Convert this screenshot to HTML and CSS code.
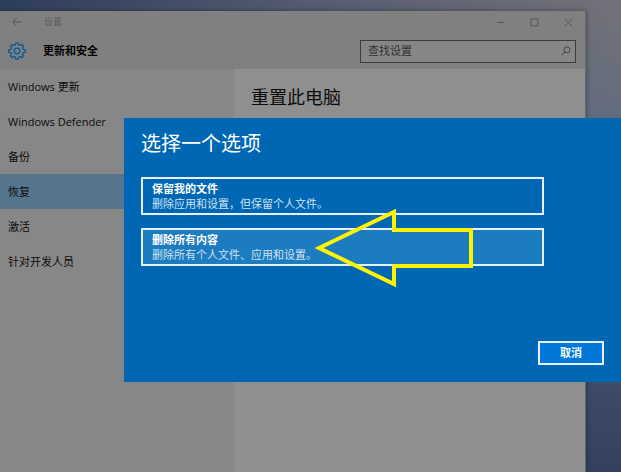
FILE: index.html
```html
<!DOCTYPE html>
<html lang="zh-CN">
<head>
  <meta charset="UTF-8">
  <meta name="viewport" content="width=device-width, initial-scale=1.0">
  <title>设置</title>
  <link rel="stylesheet" href="styles.css">
</head>
<body>
  <div class="window">
    <div class="titlebar">
      <button class="caption-button back-button" aria-label="后退">
        <svg width="10" height="10" viewBox="0 0 10 10"><path d="M9.5 5H1M4.5 1L.8 5l3.7 4"/></svg>
      </button>
      <span class="window-title">设置</span>
      <button class="caption-button" aria-label="最小化">
        <svg width="9" height="9" viewBox="0 0 9 9"><path d="M1 4.5h7"/></svg>
      </button>
      <button class="caption-button" aria-label="最大化">
        <svg width="9" height="9" viewBox="0 0 9 9"><path d="M1 1h7v7H1z"/></svg>
      </button>
      <button class="caption-button" aria-label="关闭">
        <svg width="9" height="9" viewBox="0 0 9 9"><path d="M.7 .7l7.6 7.6M8.3 .7L.7 8.3"/></svg>
      </button>
    </div>

    <header class="header">
      <svg class="gear" width="18" height="18" viewBox="0 0 18 18">
        <path d="M7.4 2.8L7.8 .8h2.4l.4 2 1.5.6 1.7-1.1 1.8 1.8-1.1 1.7.6 1.5 2.1.5v2.4l-2.1.5-.6 1.5 1.1 1.7-1.8 1.8-1.7-1.1-1.5.6-.4 2H7.8l-.4-2-1.5-.6-1.7 1.1-1.8-1.8 1.1-1.7-.6-1.5-2.1-.5V7.8l2.1-.5.6-1.5-1.1-1.7 1.8-1.8 1.7 1.1z"/>
        <circle cx="9" cy="9" r="2.8"/>
      </svg>
      <h1 class="header-title">更新和安全</h1>
      <div class="search">
        <input class="search-input" type="text" placeholder="查找设置" aria-label="查找设置">
        <svg class="search-icon" width="10" height="10" viewBox="0 0 10 10"><circle cx="6" cy="3.8" r="3"/><path d="M3.9 5.9L.6 9.4"/></svg>
      </div>
    </header>

    <div class="main">
      <nav class="sidebar">
        <a class="nav-item" href="#">Windows 更新</a>
        <a class="nav-item" href="#">Windows Defender</a>
        <a class="nav-item" href="#">备份</a>
        <a class="nav-item selected" href="#">恢复</a>
        <a class="nav-item" href="#">激活</a>
        <a class="nav-item" href="#">针对开发人员</a>
      </nav>
      <main class="content">
        <h2 class="content-title">重置此电脑</h2>
      </main>
    </div>
  </div>

  <div class="dialog" role="dialog" aria-labelledby="dialog-title">
    <h2 class="dialog-title" id="dialog-title">选择一个选项</h2>
    <div class="options">
      <button class="option">
        <strong>保留我的文件</strong>
        <span class="option-text">删除应用和设置，但保留个人文件。</span>
      </button>
      <button class="option active">
        <strong>删除所有内容</strong>
        <span class="option-text">删除所有个人文件、应用和设置。</span>
      </button>
    </div>
    <button class="cancel-button">取消</button>
    <svg class="arrow" width="162" height="80" viewBox="0 0 162 80">
      <path d="M6 40L81 4v18h77v36H81v18z"/>
    </svg>
  </div>
</body>
</html>
```

FILE: styles.css
```css
* {
  box-sizing: border-box;
}

body {
  margin: 0;
  min-height: 100vh;
  padding: 11px 35px 0 0;
  display: flex;
  overflow: hidden;
  font-family: "Open Sans", "Noto Sans CJK SC", sans-serif;
  font-size: 11px;
  line-height: 16px;
  color: #0c0c0c;
  background: linear-gradient(to bottom, transparent, #5f6b80 30%, #3e4c69 80%, #33415d),
    linear-gradient(to right, #2c3c5a, #555b70 50%, #747279);
}

button,
input {
  font: inherit;
  color: inherit;
}

h1,
h2 {
  margin: 0;
}

svg {
  fill: none;
  stroke: currentColor;
}

.window {
  flex: 1;
  display: flex;
  flex-direction: column;
  background-color: #808080;
  border-right: 1px solid #66686c;
  box-shadow: 0 0 5px rgba(0, 0, 0, 0.4);
}

.titlebar {
  display: flex;
  align-items: center;
  height: 22px;
  color: #555;
}

.caption-button {
  display: flex;
  justify-content: center;
  align-items: center;
  width: 34px;
  height: 22px;
  padding: 0;
  border: none;
  background: none;
}

.window-title {
  flex: 1;
  padding-left: 10px;
  font-size: 9px;
  color: #5e5e5e;
}

.header {
  display: flex;
  align-items: center;
  height: 36px;
  padding: 0 9px 0 8px;
}

.gear {
  color: #0c5a94;
  stroke-width: 1.3;
}

.header-title {
  flex: 1;
  padding-left: 17px;
  font-size: 11px;
  font-weight: bold;
  color: #000;
}

.search {
  display: flex;
  align-items: center;
  width: 216px;
  height: 23px;
  padding: 0 4px 0 7px;
  border: 1px solid #3c3c3c;
  background-color: #868686;
  color: #454545;
}

.search-input {
  flex: 1;
  min-width: 0;
  padding: 0;
  border: none;
  outline: none;
  background: none;
}

.search-input::placeholder {
  color: #303030;
}

.main {
  flex: 1;
  display: flex;
}

.sidebar {
  width: 40%;
  background-color: #878787;
}

.nav-item {
  display: block;
  height: 35px;
  padding-left: 8px;
  line-height: 35px;
  color: inherit;
  text-decoration: none;
}

.nav-item.selected {
  background-color: #55758c;
}

.content {
  flex: 1;
  padding: 16px 17px;
  background-color: #8f8f8f;
}

.content-title {
  font-size: 18px;
  line-height: 24px;
  font-weight: normal;
}

/* dialog over the settings window */
.dialog {
  position: absolute;
  top: 118px;
  left: 124px;
  right: 0;
  display: flex;
  flex-direction: column;
  padding: 12px 17px 17px;
  background-color: #0067b5;
  color: #fff;
}

.dialog-title {
  font-size: 20px;
  line-height: 28px;
  font-weight: normal;
}

.options {
  display: flex;
  flex-direction: column;
  gap: 13px;
  margin: 19px 60px 0 0;
}

.option {
  display: flex;
  flex-direction: column;
  justify-content: center;
  height: 38px;
  padding: 0 9px;
  border: 2px solid #e6f0f8;
  background-color: #0067b5;
  line-height: 15px;
  text-align: left;
}

.option.active {
  background-color: #1c7cc0;
}

.option-text {
  color: #cfe2f2;
}

.cancel-button {
  align-self: flex-end;
  width: 66px;
  height: 24px;
  margin-top: 75px;
  padding: 0;
  border: 2px solid #e6f0f8;
  background-color: #0078d9;
  font-weight: bold;
  line-height: 16px;
}

.arrow {
  position: absolute;
  top: 90px;
  left: 189px;
  color: #fff200;
  stroke-width: 4;
  pointer-events: none;
}
```
